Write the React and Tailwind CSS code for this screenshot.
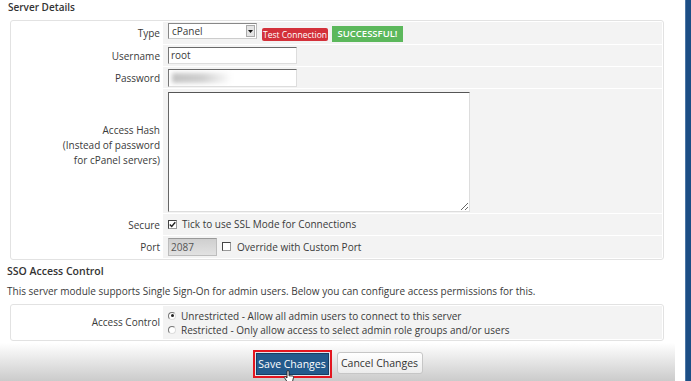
import React from "react";

function Check({ checked }) {
  return (
    <span className="inline-flex items-center justify-center w-[9px] h-[9px] border border-[#444] border-r-[#999] border-b-[#999] bg-white shrink-0">
      {checked && (
        <svg width="7" height="7" viewBox="0 0 7 7">
          <path d="M0.8 3.4 L2.7 5.4 L6.3 1.2" fill="none" stroke="#222" strokeWidth="1.4" />
        </svg>
      )}
    </span>
  );
}

function Radio({ checked }) {
  return (
    <span className="inline-flex items-center justify-center w-[8px] h-[8px] rounded-full border border-[#777] border-r-[#ddd] border-b-[#ddd] bg-white shrink-0">
      {checked && <span className="w-[3px] h-[3px] rounded-full bg-[#222]" />}
    </span>
  );
}

function Row({ label, h, children, last, labelClass = "" }) {
  return (
    <div className="grid grid-cols-[151px_1fr]" style={{ height: h }}>
      <div className={"flex items-center justify-end text-right pr-[3px] leading-[15px] " + labelClass}>{label}</div>
      <div className={"bg-[#f3f3f3] pl-[5px] " + (last ? "" : "border-b border-white")}>{children}</div>
    </div>
  );
}

export default function App() {
  return (
    <div className="flex w-[691px] h-[381px] overflow-hidden bg-white text-[#3a3a3a] font-['Open_Sans',sans-serif] text-[10px]">
      <div className="flex-1 flex flex-col min-w-0">
        <div className="pl-[10px] pr-[11px]">
          <div className="-ml-[2px] font-semibold text-[10px] leading-[14px] h-[14px] mb-[6px] text-[#333]">Server Details</div>
          <div className="border border-[#e2e2e2] rounded-[3px] p-[1px]">
            <Row label="Type" h={23}>
              <div className="flex items-start h-full">
                <div className="mt-[1px] w-[89px] h-[16px] flex items-center border border-[#888] border-r-[#bbb] border-b-[#ccc] bg-white pl-[3px] pr-[1px]">
                  <span className="flex-1 leading-[14px]">cPanel</span>
                  <span className="w-[9px] h-[12px] flex items-center justify-center bg-[#e4e4e4] border border-[#aaa]">
                    <svg width="5" height="3" viewBox="0 0 5 3"><path d="M0 0 H5 L2.5 3 Z" fill="#111" /></svg>
                  </span>
                </div>
                <div className="ml-[5px] mt-[6px] h-[13px] w-[66px] flex items-center justify-center bg-[#d3313a] text-white text-[8.5px] leading-[13px] rounded-[2px] whitespace-nowrap">Test Connection</div>
                <div className="ml-[4px] mt-[4px] h-[16px] w-[71px] flex items-center justify-center bg-[#5cb85c] text-white text-[9.5px] font-semibold leading-[16px]">SUCCESSFUL!</div>
              </div>
            </Row>
            <Row label="Username" h={22}>
              <div className="mt-[2px] w-[129px] h-[17px] border border-[#999] border-t-[#6a6a6a] border-l-[#777] border-r-[#ddd] border-b-[#ddd] bg-white pl-[2px] leading-[15px]">root</div>
            </Row>
            <Row label="Password" h={22}>
              <div className="mt-[2px] w-[129px] h-[18px] border border-[#999] border-t-[#6a6a6a] border-l-[#777] border-r-[#ddd] border-b-[#ddd] bg-white relative overflow-hidden">
                <div className="absolute left-[3px] top-[3px] w-[60px] h-[10px] bg-gradient-to-r from-[#c4c4c4] via-[#d0d0d0] to-white blur-[2px]" />
              </div>
            </Row>
            <Row
              label={<div>Access Hash<br />(Instead of password<br />for cPanel servers)</div>}
              h={125}
              labelClass="pb-[13px]"
            >
              <textarea
                className="block mt-[3px] w-[302px] h-[120px] border border-[#999] border-t-[#555] border-l-[#666] border-r-[#ddd] border-b-[#ddd] bg-white outline-none resize"
                defaultValue=""
              />
            </Row>
            <Row label="Secure" h={22}>
              <div className="flex items-center h-full gap-[5px]">
                <Check checked />
                <span className="leading-[15px]">Tick to use SSL Mode for Connections</span>
              </div>
            </Row>
            <Row label="Port" h={22} last>
              <div className="flex items-center h-full">
                <div className="w-[49px] h-[18px] bg-gradient-to-b from-[#cfcfcf] to-[#e2e2e2] border border-[#bdbdbd] border-t-[#999] pl-[2px] leading-[16px] text-[#555]">2087</div>
                <span className="ml-[5px]"><Check /></span>
                <span className="ml-[6px] leading-[15px]">Override with Custom Port</span>
              </div>
            </Row>
          </div>
          <div className="-ml-[3px] mt-[4px] font-semibold text-[10.5px] leading-[15px] h-[15px] text-[#333]">SSO Access Control</div>
          <div className="-ml-[3px] mt-[5px] leading-[15px] h-[15px] whitespace-nowrap">This server module supports Single Sign-On for admin users. Below you can configure access permissions for this.</div>
          <div className="mt-[5px] border border-[#e2e2e2] rounded-[3px] p-[1px]">
            <div className="grid grid-cols-[151px_1fr] h-[33px]">
              <div className="flex items-center justify-end pr-[3px] leading-[15px]">Access Control</div>
              <div className="bg-[#f3f3f3] pl-[5px] flex flex-col justify-center">
                <div className="flex items-center gap-[5px] leading-[14px]"><Radio checked /><span>Unrestricted - Allow all admin users to connect to this server</span></div>
                <div className="flex items-center gap-[5px] leading-[14px]"><Radio /><span>Restricted - Only allow access to select admin role groups and/or users</span></div>
              </div>
            </div>
          </div>
        </div>
        <div className="flex-1 mt-[2px] bg-gradient-to-b from-white to-[#cbcbcb] flex justify-center items-start pt-[7px] gap-[5px] relative">
          <div className="border-2 border-[#e3161f] p-[1px] bg-[#dfe6ee]">
            <div className="w-[73px] h-[22px] flex items-center justify-center bg-[#235a8c] border border-[#173e63] text-white text-[10.5px] leading-[14px]">Save Changes</div>
          </div>
          <div className="mt-[2px] w-[86px] h-[22px] flex items-center justify-center bg-gradient-to-b from-white to-[#ececec] border border-[#c6c6c6] rounded-[3px] text-[#333] text-[10.5px] leading-[14px]">Cancel Changes</div>
          <svg className="absolute left-[283px] top-[27px]" width="12" height="14" viewBox="0 0 12 14">
            <path d="M4 1 V8 L2.5 6.8 Q1.5 6.3 1.2 7.3 L4 11.5 H9.5 L10.5 7.5 Q10.6 6 9.5 6 L6 5.8 V1 Q5 0 4 1 Z" fill="white" stroke="#222" strokeWidth="0.9" />
          </svg>
        </div>
      </div>
      <div className="w-[10px] bg-white" />
      <div className="w-[6px] bg-[#1c4e85] border-l border-[#4c77a6]" />
    </div>
  );
}
